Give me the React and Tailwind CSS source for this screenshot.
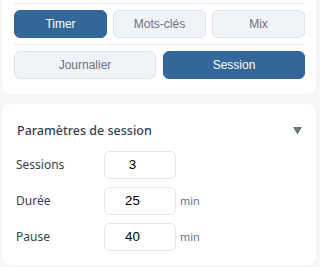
export default function App() {
  const btnBase =
    "h-7 rounded-md border text-[12px] font-medium flex items-center justify-center";
  const active = "bg-[#336699] border-[#336699] text-white";
  const inactive = "bg-[#f0f3f8] border-[#e1e5eb] text-[#6b7280]";
  const sans = { fontFamily: '"Liberation Sans", Arial, sans-serif' };
  const ui = { fontFamily: '"Noto Sans", "Open Sans", sans-serif' };
  const rows = [
    { label: "Sessions", value: "3", unit: false },
    { label: "Durée", value: "25", unit: true },
    { label: "Pause", value: "40", unit: true },
  ];
  return (
    <div className="w-[320px] h-[267px] bg-[#f5f6f8] overflow-hidden">
      <div className="ml-[2px] w-[314px] bg-white rounded-b-lg pl-3 pr-[11px] pt-[3px] pb-[15px]" style={sans}>
        <div className="h-px bg-[#e5e7eb]" />
        <div className="mt-[6px] grid grid-cols-3 gap-[6px]">
          <div className={`${btnBase} ${active}`}>Timer</div>
          <div className={`${btnBase} ${inactive}`}>Mots-clés</div>
          <div className={`${btnBase} ${inactive}`}>Mix</div>
        </div>
        <div className="mt-[6px] h-px bg-[#e5e7eb]" />
        <div className="mt-[6px] grid grid-cols-2 gap-[7px]">
          <div className={`${btnBase} ${inactive}`}>Journalier</div>
          <div className={`${btnBase} ${active}`}>Session</div>
        </div>
      </div>
      <div className="mt-[10px] ml-[2px] w-[314px] h-[161px] bg-white rounded-lg pl-3 pr-[13px] pt-[18px]" style={ui}>
        <div className="flex items-center justify-between pl-[3px] h-[18px]">
          <span className="text-[12.5px] font-medium text-[#374151]">Paramètres de session</span>
          <svg width="9" height="8" viewBox="0 0 9 8" className="mr-[1px]">
            <path d="M0 0 H9 L4.5 7.5 Z" fill="#6b7280" />
          </svg>
        </div>
        <div className="mt-[11px] flex flex-col gap-2">
          {rows.map((r) => (
            <div key={r.label} className="flex items-center h-7">
              <span className="w-[90px] pl-[2px] text-[12px] text-[#374151]">{r.label}</span>
              <div
                className="w-[72px] h-7 rounded-md border border-[#e5e7eb] bg-white flex items-center justify-center pr-[15px] text-[13.33px] text-black"
                style={sans}
              >
                {r.value}
              </div>
              {r.unit && <span className="ml-1 text-[11px] text-[#6b7280]">min</span>}
            </div>
          ))}
        </div>
      </div>
    </div>
  );
}
